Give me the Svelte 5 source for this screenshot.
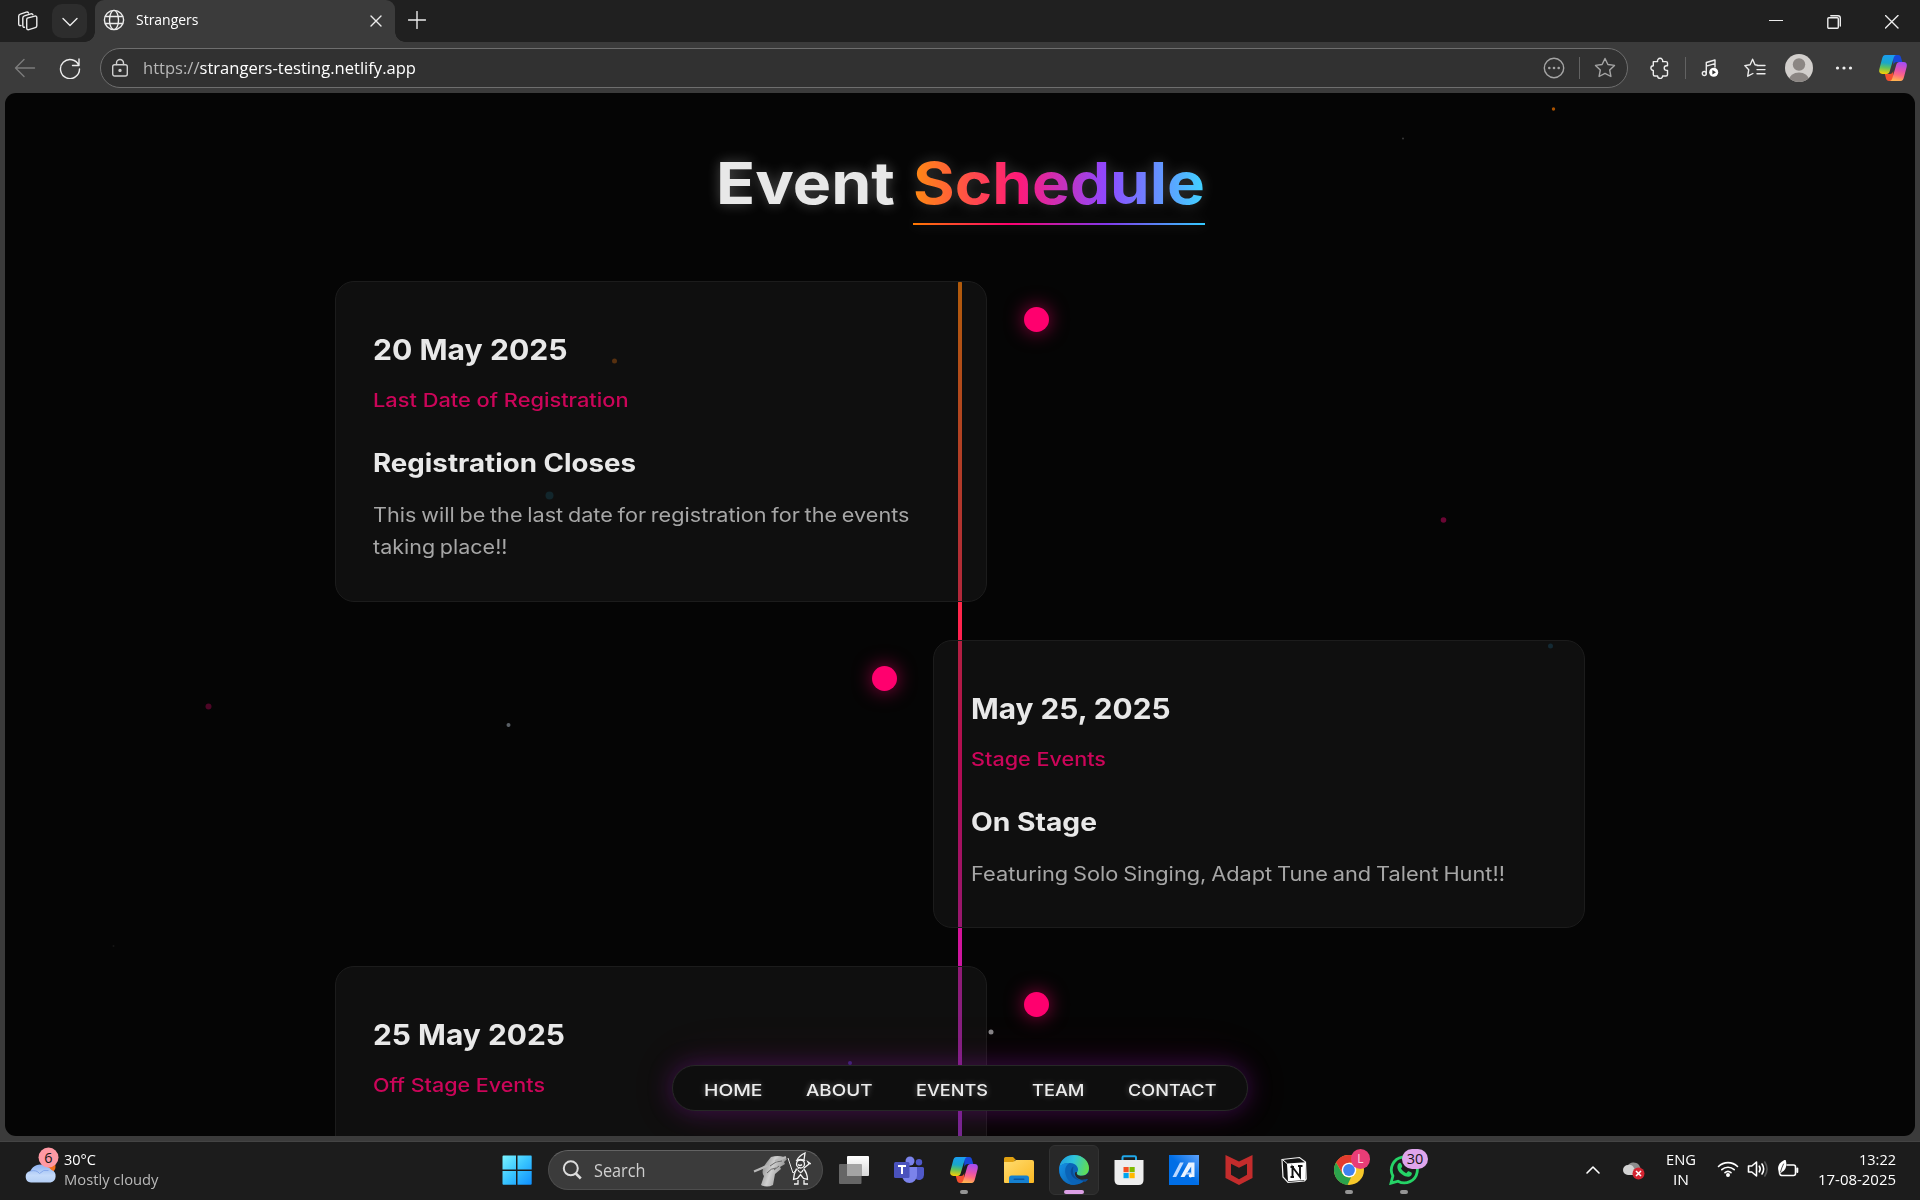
<script>
  // Stretches a label horizontally so it takes up the given width.
  function fit(node, width) {
    const natural = node.getBoundingClientRect().width;
    if (!natural) return;
    node.style.transform = `scaleX(${width / natural})`;
    node.style.marginRight = `${width - natural}px`;
  }

  const events = [
    {
      side: 'left',
      date: ['20 May 2025', 194.5],
      kind: ['Last Date of Registration', 255.5],
      title: ['Registration Closes', 263],
      lines: [['This will be the last date for registration for the events', 536.5], ['taking place!!', 134.5]]
    },
    {
      side: 'right',
      date: ['May 25, 2025', 199.5],
      kind: ['Stage Events', 135],
      title: ['On Stage', 126],
      lines: [['Featuring Solo Singing, Adapt Tune and Talent Hunt!!', 534]]
    },
    {
      side: 'left',
      date: ['25 May 2025', 192],
      kind: ['Off Stage Events', 172],
      lines: []
    }
  ];

  const links = [['HOME', 58.5], ['ABOUT', 66.5], ['EVENTS', 72], ['TEAM', 52.5], ['CONTACT', 88.5]];

  const particles = [
    { x: 1553.5, y: 109, r: 1.7, c: '#a85200' },
    { x: 1403, y: 138.5, r: 1, c: '#3a3a3a' },
    { x: 614.5, y: 361, r: 2.5, c: '#57300f' },
    { x: 549.5, y: 495.5, r: 4, c: '#12262c' },
    { x: 1443.5, y: 520, r: 2.8, c: '#6a0634' },
    { x: 208.5, y: 706.5, r: 3, c: '#4d0626' },
    { x: 508.5, y: 725, r: 2, c: '#5a6066' },
    { x: 1550.5, y: 646, r: 2.5, c: '#142a34' },
    { x: 991, y: 1032, r: 2.5, c: '#858285' },
    { x: 850, y: 1063, r: 2, c: '#43207a' },
    { x: 113.5, y: 946, r: 1, c: '#161616' }
  ];
</script>

{#snippet copilot(id)}
  <svg width="30" height="30" viewBox="0 0 30 30">
    <defs>
      <linearGradient id="{id}a" x1="0.3" y1="0" x2="0.2" y2="1">
        <stop offset="0" stop-color="#1b9df0" /><stop offset=".4" stop-color="#19a7c9" /><stop offset=".65" stop-color="#5fc25e" /><stop offset="1" stop-color="#ffd000" />
      </linearGradient>
      <linearGradient id="{id}b" x1="0.7" y1="0" x2="0.5" y2="1">
        <stop offset="0" stop-color="#a14df5" /><stop offset=".45" stop-color="#e552ae" /><stop offset=".7" stop-color="#ff6a80" /><stop offset="1" stop-color="#ffb350" />
      </linearGradient>
    </defs>
    <path d="M15 2h5.200c1.500 0 2.300.8 2.700 2.200L24.300 9H19c-2 0-3 1-3.600 3z" fill="#1847d8" />
    <path d="M15.500 28H11c-1.700 0-2.500-1-3-2.500L6.800 21h5c2 0 2.800-1 3.400-3z" fill="#f2502f" />
    <path d="M7.500 2H18.500c-1.500 0-2.300 1.200-2.800 2.800l-4 13.500c-.6 1.900-1.500 2.700-3.200 2.700H4.500C1.800 21 .6 19 1.300 16.300L4 6C4.700 3.300 5.400 2 7.500 2z" fill="url(#{id}a)" />
    <path d="M22.500 28H11.500c1.500 0 2.300-1.200 2.800-2.800l4-13.500c.6-1.900 1.500-2.700 3.200-2.700h4c2.700 0 3.900 2 3.200 4.700L26 24c-.7 2.700-1.400 4-3.500 4z" fill="url(#{id}b)" />
  </svg>
{/snippet}

<div class="screen">
  <header class="tabs">
    <div class="tab-tools">
      <svg width="22" height="22" viewBox="0 0 22 22" class="line">
        <path d="M11.300 8.200l7.500-2.100c1.200-.3 2 .3 2 1.400v8.200c0 1-.5 1.600-1.500 1.900l-6.400 2c-1.300.4-2.200-.2-2.200-1.500V10c0-1 .3-1.600.6-1.800z" />
        <path d="M8.500 17.200c-1 .2-1.700-.4-1.700-1.600V8c0-1.200.5-1.800 1.600-2.100l6.400-2c1-.3 1.800 0 2.100.9" />
        <path d="M4.900 15.500c-1.200.4-2.200-.2-2.200-1.500V6.200c0-1.200.5-1.800 1.600-2.100l6-1.900c1-.3 1.800 0 2.200.8" />
      </svg>
      <div class="tab-menu">
        <svg width="16" height="10" viewBox="0 0 16 10" class="line"><path d="M1 1.500l7 7 7-7" /></svg>
      </div>
    </div>
    <div class="tab">
      <svg width="22" height="22" viewBox="0 0 22 22" class="line globe">
        <circle cx="11" cy="11" r="9.600" /><ellipse cx="11" cy="11" rx="4.500" ry="9.600" /><path d="M2.500 7.500h17M2.500 14.500h17" />
      </svg>
      <span class="tab-name"><span class="fit" use:fit={62.5}>Strangers</span></span>
      <svg width="12" height="12" viewBox="0 0 12 12" class="line close"><path d="M1 1l10 10M11 1L1 11" /></svg>
    </div>
    <svg width="18" height="18" viewBox="0 0 18 18" class="line plus"><path d="M9 0.500v17M0.500 9h17" /></svg>
    <div class="win">
      <svg width="14" height="14" viewBox="0 0 14 14" class="line sharp"><path d="M0 5.500h13" /></svg>
      <svg width="14" height="14" viewBox="0 0 14 14" class="line"><rect x=".8" y="2.800" width="10.500" height="10.500" rx="1" /><path d="M3.800.8h7.200q2.300 0 2.300 2.300v8" /></svg>
      <svg width="14" height="14" viewBox="0 0 14 14" class="line"><path d="M.5.500l12.500 12.500M13 .5L.5 13" /></svg>
    </div>
  </header>

  <div class="toolbar">
    <svg width="22" height="20" viewBox="0 0 22 20" class="line back"><path d="M20.500 10H1.500M10 1.500L1.500 10l8.500 8.500" /></svg>
    <svg width="22" height="22" viewBox="0 0 22 22" class="line reload"><path d="M19.800 8.500A9.500 9.500 0 1 0 20.500 12M20 2v6.500h-6.500" /></svg>
    <div class="address">
      <svg width="18" height="20" viewBox="0 0 18 20" class="line lock"><rect x="1.700" y="6.800" width="14.600" height="11.200" rx="2" /><path d="M5.500 6.500V5a3.500 3.500 0 0 1 7 0v1.500" /><circle cx="9" cy="12.400" r="1" fill="#d8d8d8" /></svg>
      <span class="url"><span class="fit" use:fit={273}><i>https://</i>strangers-testing.netlify.app</span></span>
      <svg width="22" height="22" viewBox="0 0 22 22" class="line dim"><circle cx="11" cy="11" r="9.700" /><g fill="#a5a5a5" stroke="none"><circle cx="6.300" cy="11" r="1.300" /><circle cx="11" cy="11" r="1.300" /><circle cx="15.700" cy="11" r="1.300" /></g></svg>
      <span class="bar"></span>
      <svg width="22" height="22" viewBox="0 0 22 22" class="line dim"><path d="M11 1.500l2.900 6 6.600.9-4.800 4.600 1.200 6.500L11 16.400l-5.900 3.100L6.300 13 1.500 8.400l6.600-.9z" /></svg>
    </div>
    <div class="actions">
      <span class="slot"><svg width="20" height="22" viewBox="0 0 20 22" class="line"><path d="M3.300 4.600H7.600a2.600 2.600 0 1 1 5 0H16q1.500 0 1.500 1.500V8.800h-1a2.300 2.300 0 0 0 0 4.600h1v4.100q0 1.500-1.500 1.500h-3.400a2.500 2.500 0 0 1-5 0H4.800q-1.500 0-1.500-1.500v-4a2.400 2.400 0 1 1 0-4.800z" /></svg></span>
      <span class="bar"></span>
      <span class="slot"><svg width="18" height="20" viewBox="0 0 18 20" class="line"><circle cx="3.300" cy="15.500" r="2" /><path d="M5.300 15.500V4.500L14 2v7M5.300 8.200L14 5.700" /><circle cx="12.700" cy="14.200" r="4.500" fill="#fff" stroke="none" /><path d="M11.400 12v4.400l3.600-2.200z" fill="#333" stroke="none" /></svg></span>
      <span class="slot"><svg width="22" height="22" viewBox="0 0 22 22" class="line"><path d="M13.500 8.200L11 7.800 8.600 2.200 6.100 7.800l-5.300.8 3.900 4.200-1 6.400 5.200-2.700M13 8.500h8M13 12.600h8M13 16.700h8" /></svg></span>
      <span class="slot"><svg width="28" height="28" viewBox="0 0 28 28"><defs><clipPath id="av"><circle cx="14" cy="14" r="14" /></clipPath></defs><g clip-path="url(#av)"><rect width="28" height="28" fill="#d2cfcc" /><circle cx="14" cy="10.500" r="6.200" fill="#8b8683" /><ellipse cx="14" cy="26" rx="10" ry="7.500" fill="#8b8683" /></g></svg></span>
      <span class="slot"><svg width="18" height="4" viewBox="0 0 18 4" fill="#eee"><circle cx="2.500" cy="2" r="1.600" /><circle cx="9" cy="2" r="1.600" /><circle cx="15.500" cy="2" r="1.600" /></svg></span>
      <span class="slot last">{@render copilot('top')}</span>
    </div>
  </div>

  <main class="page">
    <h1><span class="fit" use:fit={179}>Event</span><span class="grad"><span class="fit" use:fit={292}>Schedule</span></span></h1>

    <div class="timeline">
      <div class="spine"></div>
      {#each events as e}
        <article class={e.side}>
          <div class="dot"></div>
          <h2><span class="fit" use:fit={e.date[1]}>{e.date[0]}</span></h2>
          <h4><span class="fit" use:fit={e.kind[1]}>{e.kind[0]}</span></h4>
          {#if e.title}
            <h3><span class="fit" use:fit={e.title[1]}>{e.title[0]}</span></h3>
          {/if}
          {#each e.lines as l}
            <p><span class="fit" use:fit={l[1]}>{l[0]}</span></p>
          {/each}
        </article>
      {/each}
    </div>

    <nav>
      {#each links as l}
        <a href="#top"><span class="fit" use:fit={l[1]}>{l[0]}</span></a>
      {/each}
    </nav>
  </main>

  <svg class="particles" width="1920" height="1136" viewBox="0 0 1920 1136">
    {#each particles as p}<circle cx={p.x} cy={p.y} r={p.r} fill={p.c} />{/each}
  </svg>

  <footer class="taskbar">
    <div class="weather">
      <svg width="40" height="44" viewBox="0 0 40 44">
        <defs><linearGradient id="cl" x1="0" y1="0" x2="0" y2="1"><stop offset="0" stop-color="#8fb4f2" /><stop offset=".6" stop-color="#c4dafa" /><stop offset="1" stop-color="#b5cff5" /></linearGradient></defs>
        <circle cx="25" cy="20" r="6.500" fill="#f2701d" />
        <path d="M7 35.500A5.800 5.800 0 0 1 6.500 24 10 9.500 0 0 1 22 19.500a8 8 0 0 1 5.500 3.600A6.500 6.500 0 0 1 26.500 35.500z" fill="url(#cl)" />
        <path d="M6.500 24q6-1.500 9 2.500M15.500 26.500q4-4.500 9-3" stroke="#86a9ec" fill="none" />
        <circle cx="24.500" cy="10.500" r="10" fill="#ff99a4" />
        <text x="24.300" y="15.800" text-anchor="middle" font-size="14.500" fill="#161616">6</text>
      </svg>
      <div class="temps"><span><span class="fit" use:fit={32}>30°C</span></span><span class="soft"><span class="fit" use:fit={94.5}>Mostly cloudy</span></span></div>
    </div>

    <svg class="start" width="30" height="30" viewBox="0 0 30 30">
      <defs><linearGradient id="wn" x1="0" y1="0" x2="1" y2="1"><stop offset="0" stop-color="#7af3ff" /><stop offset=".5" stop-color="#38c4ff" /><stop offset="1" stop-color="#0f8fff" /></linearGradient></defs>
      <path d="M.5 1.500q0-1 1-1H14v14H.5zM15.500.500H29q.7 0 .7 1v13H15.500zM.5 16H14v13.700H1.500q-1 0-1-1zM15.500 16h14.200v12.700q0 1-1 1H15.500z" fill="url(#wn)" />
    </svg>

    <div class="search">
      <svg width="20" height="20" viewBox="0 0 20 20" fill="none" stroke="#dcdcdc" stroke-width="2"><circle cx="8.800" cy="8.300" r="7" /><path d="M13.800 13.500l5 5" stroke-width="2.600" /></svg>
      <span><span class="fit" use:fit={51.5}>Search</span></span>
      <svg width="60" height="36" viewBox="0 0 60 36" class="art">
        <defs><linearGradient id="hd" x1="0" y1="0" x2="1" y2="0.400"><stop offset="0" stop-color="#777" /><stop offset=".5" stop-color="#cfcfcf" /><stop offset="1" stop-color="#888" /></linearGradient></defs>
        <path d="M10 33l3-9c-3-4-1-9 3-14l4-5q7-2 13 0l3 2-3 3 1 2-5 3 1 2-6 5-2 11q-6 3-12 0z" fill="url(#hd)" />
        <path d="M19 14l6-4 6-1M23 18l5-4M16 21q4-5 9-5" stroke="#6b6b6b" fill="none" />
        <path d="M3 19.500l14-6M24 9l11-4" stroke="#b8b8b8" stroke-width="2.200" />
        <path d="M37 6l5 15 7-6" stroke="#eee" fill="none" />
        <g stroke="#f4f4f4" fill="none" stroke-width="1.300">
          <path d="M46 8q2-4 8-7l-1 7M45 9q5-3 9 0" /><circle cx="49.500" cy="12" r="4" /><path d="M47 12.500q2 2 4 0M45.500 16.500q-3 6-3 11l4-1 3-4 3 4 4 1q0-6-4-11M53 16l5-4-1-2 3 2M47 18q3 5 5 0M47 28v4h-4M53 28v4h4" />
        </g>
      </svg>
    </div>

    <div class="apps">
      <span class="app"><svg width="30" height="30" viewBox="0 0 30 30"><defs><linearGradient id="tv" x1="0" y1="0" x2="0" y2="1"><stop offset="0" stop-color="#fff" /><stop offset="1" stop-color="#d8d8d8" /></linearGradient></defs><rect x="8" y="1" width="22" height="20" rx="1" fill="url(#tv)" /><rect x="0" y="9" width="22.500" height="20" rx="1" fill="#666" /><rect x="8" y="9" width="14.500" height="12" fill="#a4a4a4" /></svg></span>
      <span class="app"><svg width="32" height="28" viewBox="0 0 32 28"><circle cx="26" cy="6.300" r="3.200" fill="#5059c9" /><path d="M23 11h6.500q1.500 0 1.500 1.500V19a5 5 0 0 1-8 4z" fill="#5059c9" /><circle cx="17" cy="5" r="4.500" fill="#7b83eb" /><path d="M9 11h15v8.500a7.500 7.500 0 0 1-15 0z" fill="#7b83eb" /><rect x="1" y="6" width="15.500" height="16" rx="1.500" fill="#4a52bd" /><path d="M5 10h8M9 10v8" stroke="#fff" stroke-width="2" /></svg></span>
      <span class="app run">{@render copilot('bot')}</span>
      <span class="app"><svg width="30" height="28" viewBox="0 0 30 28"><defs><linearGradient id="fo" x1="0" y1="0" x2="1" y2="1"><stop offset="0" stop-color="#ffdc70" /><stop offset="1" stop-color="#fbb822" /></linearGradient></defs><path d="M0 8V2.500Q0 1 1.500 1H9l3 3h-1L9 8z" fill="#e0a010" /><path d="M0 6h9l3-2h16q2 0 2 2v20q0 1-1 1H1q-1 0-1-1z" fill="url(#fo)" /><path d="M5 27v-5q0-2.500 2.500-2.500h15Q25 19.500 25 22v5z" fill="#1580d0" /><rect x="9.500" y="22.500" width="11" height="1.600" rx=".8" fill="#0b55a0" /></svg></span>
      <span class="app run active"><svg width="30" height="30" viewBox="0 0 30 30"><defs><linearGradient id="e1" x1="0" y1=".3" x2="1" y2=".5"><stop offset="0" stop-color="#1f9fe0" /><stop offset=".45" stop-color="#2fc4dc" /><stop offset="1" stop-color="#62df4f" /></linearGradient><linearGradient id="e2" x1="0" y1="0" x2="1" y2="1"><stop offset="0" stop-color="#1492e6" /><stop offset="1" stop-color="#0c5fae" /></linearGradient></defs><circle cx="15" cy="15" r="15" fill="#0a64b8" /><path d="M.4 12C1.500 4.500 7.500 0 15 0c9 0 15 6.500 15 13 0 5-3.500 7.800-7.500 7.800-3.500 0-5.500-1.500-4.500-3.300 3-3.500-.5-9.500-7-9.500-5 0-9 1.500-10.600 4z" fill="url(#e1)" /><path d="M.3 12C2 9.500 6 8 10.500 8c-3.500 2-4.800 5.500-4.300 9.500C7 23.500 11 28.300 17 29.900 7.500 31-.8 23 .3 12z" fill="url(#e2)" /><path d="M14.500 11.500c-4 2.500-3.500 8.500.5 11.500 4 3 9 3 12.500.5l1.500 1c-1 1-2 2-3 2.500-1-1-15-2-11.500-15.500z" fill="#0a4d98" /><path d="M18 17.500c-1 1.800 1 3.300 4.500 3.300 3.500 0 6-1.600 7.500-4.300 0 3-.6 5-1.500 7-3 2-11 2-12.500-4-.5-2 .8-3 2-2z" fill="#282828" /></svg></span>
      <span class="app"><svg width="30" height="30" viewBox="0 0 30 30"><path d="M8.500 7V2.500Q8.500 1.200 9.800 1.200h11q1.200 0 1.200 1.300V7" fill="none" stroke="#20a8ea" stroke-width="2" /><path d="M.5 5h29v20q0 5-5 5h-19q-5 0-5-5z" fill="#eeeeee" /><rect x="9.500" y="12" width="5.200" height="5.200" fill="#f25022" /><rect x="15.500" y="12" width="5.200" height="5.200" fill="#7fba00" /><rect x="9.500" y="18" width="5.200" height="5.200" fill="#00a4ef" /><rect x="15.500" y="18" width="5.200" height="5.200" fill="#ffb900" /></svg></span>
      <span class="app"><svg width="30" height="30" viewBox="0 0 30 30"><defs><linearGradient id="ma" x1="0" y1="1" x2="1" y2="0"><stop offset=".5" stop-color="#006ee6" /><stop offset="1" stop-color="#5ea2fa" /></linearGradient></defs><rect width="30" height="30" fill="url(#ma)" /><path d="M3.500 22L11 7.500h3.700L7.200 22z" fill="#bcd8ff" /><path d="M11.500 22L19.500 7.500h6V22h-3.300V11.500L15.500 22z" fill="#eaf3ff" /><path d="M17.500 17.500h5v2h-6z" fill="#b5d3fb" /><circle cx="21.500" cy="20.700" r="1.800" fill="#fff" /></svg></span>
      <span class="app"><svg width="28" height="30" viewBox="0 0 28 30"><path d="M.5 0L14 6.500 27.500 0v23L14 30 .5 23zM6 8.800v11L14 24.300l8-4.500v-11L14 12.800z" fill="#c32c2c" fill-rule="evenodd" /></svg></span>
      <span class="app"><svg width="26" height="28" viewBox="0 0 26 28"><path d="M1 3.500L18.500 1.500 24.500 6l.7 17-1.700 2L7 26.500 2 21z" fill="#151515" stroke="#f2f2f2" stroke-width="1.200" /><path d="M6 7.500l18.500-1.200V24L7 25.300z" fill="#fff" /><path d="M2 4l4 3.500" stroke="#fff" /><path d="M11.500 21V11l7.500 10V10M9.500 11H13M17 10h4.500M9.500 21H13" stroke="#111" stroke-width="1.900" fill="none" /></svg></span>
      <span class="app run"><svg width="30" height="30" viewBox="0 0 30 30"><circle cx="15" cy="15" r="15" fill="#f7c82a" /><path d="M2 7.500A15 15 0 0 1 28 7.500H15L8.500 18.500z" fill="#e33b2e" /><path d="M2 7.500L8.500 18.800q3 4.500 8.500 3.700L13.500 30A15 15 0 0 1 2 7.500z" fill="#2ba24c" /><circle cx="15" cy="15" r="7.300" fill="#fff" /><circle cx="15" cy="15" r="5.900" fill="#3f82f0" /></svg><b class="badge pink">L</b></span>
      <span class="app run"><svg width="30" height="30" viewBox="0 0 30 30"><path d="M2 28.200L3.900 21A13 13 0 1 1 9 26.200z" fill="none" stroke="#25d366" stroke-width="2.800" /><path d="M9.500 8.500c1-1.200 2.200-.9 2.700.3l1 2.300q.2.700-1.200 2.400c1.300 2.300 3 3.700 5.300 4.700 1.500-2 1.800-2.200 2.500-1.900l2.600 1.300c.8.500.5 2-.3 3-2 2-5.500 1.500-9-1-4.500-3.300-6-8-3.600-11.100z" fill="#25d366" /></svg><b class="badge lilac">30</b></span>
    </div>

    <div class="tray">
      <svg width="16" height="10" viewBox="0 0 16 10" class="line thick chev"><path d="M2 8l6-6 6 6" /></svg>
      <svg width="22" height="20" viewBox="0 0 22 20" class="cloud"><path d="M5 14A4.500 4.500 0 0 1 4.500 6 7 7 0 0 1 16 5l3 6-5 4z" fill="#8d8d8d" /><path d="M5 15a5 5 0 0 1 0-10q4-1 6 3l3 6-1 1z" fill="#d2d2d2" /><circle cx="15.500" cy="13.500" r="6" fill="#d42431" /><path d="M13 11l5 5M18 11l-5 5" stroke="#fff" stroke-width="1.600" /></svg>
      <div class="lang"><span><span class="fit" use:fit={30}>ENG</span></span><span><span class="fit" use:fit={16}>IN</span></span></div>
      <svg width="22" height="18" viewBox="0 0 22 18" class="line thick wifi"><path d="M1.500 6.500a13.500 13.500 0 0 1 19 0M4.800 9.700a9 9 0 0 1 12.400 0M8 12.700a4.500 4.500 0 0 1 6 0" /><circle cx="11" cy="15" r="1.200" fill="#fff" /></svg>
      <svg width="22" height="18" viewBox="0 0 22 18" class="line thick vol"><path d="M1.500 6h3.300L9.500 2v14l-4.700-4H1.500zM12.300 6.200q1.800 2.800 0 5.600M15 4q3.300 5 0 10" /><path d="M17.800 2q4.500 7 0 14" stroke="#555" /></svg>
      <svg width="22" height="20" viewBox="0 0 22 20" class="line thick"><path d="M10 5h6.500q2 0 2 2v6.500q0 2-2 2H5.500q-2.500 0-2.500-1.500" /><path d="M20.300 8.500v3.500" stroke-width="2" /><path d="M1.500 11C0 6 2.500 2 8.500-.5 10.500 5 9 10.500 5 12L2 14.500z" fill="#fff" stroke="none" /><path d="M6.500 4q-2 4-3 8" stroke="#222" stroke-width=".8" /></svg>
      <div class="clock"><span><span class="fit" use:fit={37}>13:22</span></span><span><span class="fit" use:fit={78}>17-08-2025</span></span></div>
    </div>
  </footer>
</div>

<style>
  :global(body) { margin: 0; background: #3b3b3b; }
  .screen {
    position: relative;
    width: 1920px;
    height: 1200px;
    overflow: hidden;
    display: flex;
    flex-direction: column;
    background: #3b3b3b;
    font-family: "Open Sans", "Noto Sans", sans-serif;
    color: #fff;
  }
  svg { display: block; flex: none; }
  .line { fill: none; stroke: #ececec; stroke-width: 1.4; stroke-linecap: round; stroke-linejoin: round; }
  .line.thick { stroke-width: 1.6; stroke: #fff; }
  .sharp { shape-rendering: crispEdges; }
  .fit { display: inline-block; white-space: nowrap; transform-origin: 0 50%; }

  .tabs { height: 42px; flex: none; display: flex; background: #202020; }
  .tab-tools { width: 95px; box-sizing: border-box; display: flex; padding: 4px 0 0 16px; }
  .tab-tools > svg { margin-top: 6px; }
  .tab-menu { width: 35px; height: 34px; margin-left: 14px; border-radius: 10px; background: #2d2d2d; display: grid; place-items: center; }
  .tab-menu svg { margin-top: 2px; }
  .tab { position: relative; width: 300px; box-sizing: border-box; display: flex; padding: 0 13px 0 8px; background: #3b3b3b; border-radius: 9px 9px 0 0; }
  .tab::before, .tab::after { content: ''; position: absolute; bottom: 0; width: 10px; height: 10px; }
  .tab::before { left: -10px; background: radial-gradient(circle at 0 0, transparent 9.5px, #3b3b3b 10px); }
  .tab::after { right: -10px; background: radial-gradient(circle at 100% 0, transparent 9.5px, #3b3b3b 10px); }
  .globe { margin-top: 9px; }
  .tab-name { flex: 1; padding-left: 11px; font-size: 14.5px; line-height: 39px; }
  .close { margin-top: 15px; }
  .plus { margin: 11px 0 0 13px; }
  .win { margin-left: auto; display: flex; gap: 44px; padding: 15px 21px 0 0; }

  .toolbar { height: 51px; flex: none; display: flex; align-items: center; padding: 0 0 0 14px; }
  .back { stroke: #7c7c7c; }
  .reload { margin-left: 23px; }
  .address { width: 1528px; flex: none; height: 40px; box-sizing: border-box; margin-left: 19px; border: 1px solid #6e6e6e; border-radius: 20px; background: #313131; display: flex; align-items: center; padding: 0 11px 0 10px; }
  .lock { stroke: #cfcfcf; }
  .url { flex: 1; padding-left: 14px; font-size: 17px; line-height: 36px; }
  .url i { font-style: normal; color: #b8b8b8; }
  .dim { stroke: #a5a5a5; }
  .address .bar { margin: 0 14px; }
  .bar { width: 1px; height: 22px; background: #626262; }
  .actions { display: flex; align-items: center; padding-left: 10px; }
  .actions .bar { margin: 0 2px; }
  .slot { width: 44.7px; flex: none; display: grid; place-items: center; }
  .slot.last { padding-left: 4px; }

  .page {
    position: relative;
    height: 1043px;
    flex: none;
    margin: 0 5px;
    box-sizing: border-box;
    padding-top: 53px;
    border-radius: 11px;
    overflow: hidden;
    background: #050505;
    font-family: Inter, "Open Sans", sans-serif;
    color: #e8e8e8;
  }
  h1, h2, h3, h4, p { margin: 0; }
  h1 { height: 80px; display: flex; justify-content: center; gap: 18px; padding-left: 1px; font-size: 58px; line-height: 74px; font-weight: 700; text-shadow: 0 0 12px rgba(255, 255, 255, 0.28); margin-bottom: 55px; }
  .grad { border-bottom: 2px solid; border-image: linear-gradient(90deg, #ff7b00, #ff006e 33%, #8338ec 66%, #33ccff) 1; height: 77px; filter: drop-shadow(0 0 7px rgba(255, 255, 255, 0.2)); }
  .grad .fit { color: transparent; text-shadow: none; background: linear-gradient(90deg, #ff8a12, #ff1a78 36%, #8f48ff 66%, #3fd4ff); background-clip: text; -webkit-background-clip: text; }

  .timeline { position: relative; width: 1250px; margin: 0 auto; display: flex; flex-direction: column; gap: 38px; }
  .spine { position: absolute; left: 623px; top: 0; width: 4px; height: 1455px; border-radius: 2px; background: linear-gradient(#ff7b00, #ff006e 33.3%, #8338ec 66.6%, #33ccff); }
  article { position: relative; width: 652px; min-height: 280px; box-sizing: border-box; padding: 48px 37px 37.5px; border: 1px solid #1c1c1c; border-radius: 19px; background: rgba(33, 33, 33, 0.35); }
  article.right { align-self: flex-end; }
  .dot { position: absolute; top: 25px; width: 25px; height: 25px; border-radius: 50%; background: #ff006e; box-shadow: 0 0 19px rgba(255, 0, 110, 0.6); }
  .left .dot { right: -63px; }
  .right .dot { left: -62px; }
  h2 { font-size: 29px; line-height: 39px; font-weight: 700; }
  h4 { margin-top: 17px; font-size: 19px; line-height: 30px; font-weight: 500; color: #cb0559; }
  h3 { margin-top: 27px; font-size: 25px; line-height: 40px; font-weight: 700; margin-bottom: 16px; }
  p { font-size: 19.5px; line-height: 32px; color: #a6a6a6; word-spacing: -1.2px; }

  nav { position: absolute; left: 667px; top: 972px; width: 576px; height: 46px; box-sizing: border-box; display: flex; align-items: center; justify-content: center; gap: 43.5px; padding-top: 3px; border: 1px solid #262826; border-radius: 23px; background: #0e0e0e; box-shadow: 0 0 24px rgba(131, 20, 170, 0.4), 0 0 60px rgba(255, 0, 110, 0.08); }
  nav a { color: #ececec; text-decoration: none; font-size: 16.5px; font-weight: 550; text-shadow: 0 0 6px rgba(255, 255, 255, 0.35); }

  .particles { position: absolute; left: 0; top: 0; pointer-events: none; }

  .taskbar { height: 59px; flex: none; margin-top: 5px; box-sizing: border-box; border-top: 1px solid #444; background: #1c1c1c; display: flex; }
  .weather { width: 502px; box-sizing: border-box; display: flex; padding: 5px 0 0 24px; }
  .temps, .lang, .clock { display: flex; flex-direction: column; font-size: 14.5px; line-height: 20px; padding-top: 3px; }
  .soft { color: #b9b9b9; }
  .start { margin-top: 13px; }
  .search { width: 275px; height: 40px; box-sizing: border-box; margin: 8px 0 0 16px; border-radius: 20px; border: 1px solid #4d4d4d; border-top-color: #636363; background: #3b3b3b; display: flex; align-items: center; padding-left: 13px; font-size: 17.5px; color: #cfcfcf; }
  .search > span { padding-left: 12px; }
  .art { margin-left: auto; margin-right: 11px; }
  .apps { display: flex; gap: 5px; margin: 3px 0 0 6px; }
  .app { position: relative; width: 50px; height: 50px; box-sizing: border-box; display: grid; place-items: center; }
  .run::after { content: ''; position: absolute; left: 21px; bottom: 1px; width: 8px; height: 4px; border-radius: 2px; background: #959595; }
  .active { background: #282828; border: 1px solid #323232; border-radius: 6px; }
  .active::after { left: 14px; width: 20px; bottom: 0; background: #dca0e6; }
  .badge { position: absolute; top: 4px; height: 20px; border-radius: 10px; font-weight: 400; text-align: center; line-height: 20px; }
  .pink { left: 27px; width: 19px; background: #ea3d77; font-size: 12px; color: #ffd9e4; }
  .lilac { left: 23px; width: 26px; background: #dfa5ec; font-size: 14.5px; color: #161616; }
  .tray { margin-left: auto; display: flex; padding-right: 24px; }
  .tray > svg { margin-top: 18px; }
  .tray > svg.chev { margin: 23px 22px 0 0; }
  .cloud { margin-right: 21px; }
  .lang { width: 30px; align-items: center; margin-right: 21px; padding-top: 8px; }
  .wifi, .vol { margin-right: 8px; }
  .clock { width: 97px; align-items: flex-end; padding-top: 8px; }
</style>
